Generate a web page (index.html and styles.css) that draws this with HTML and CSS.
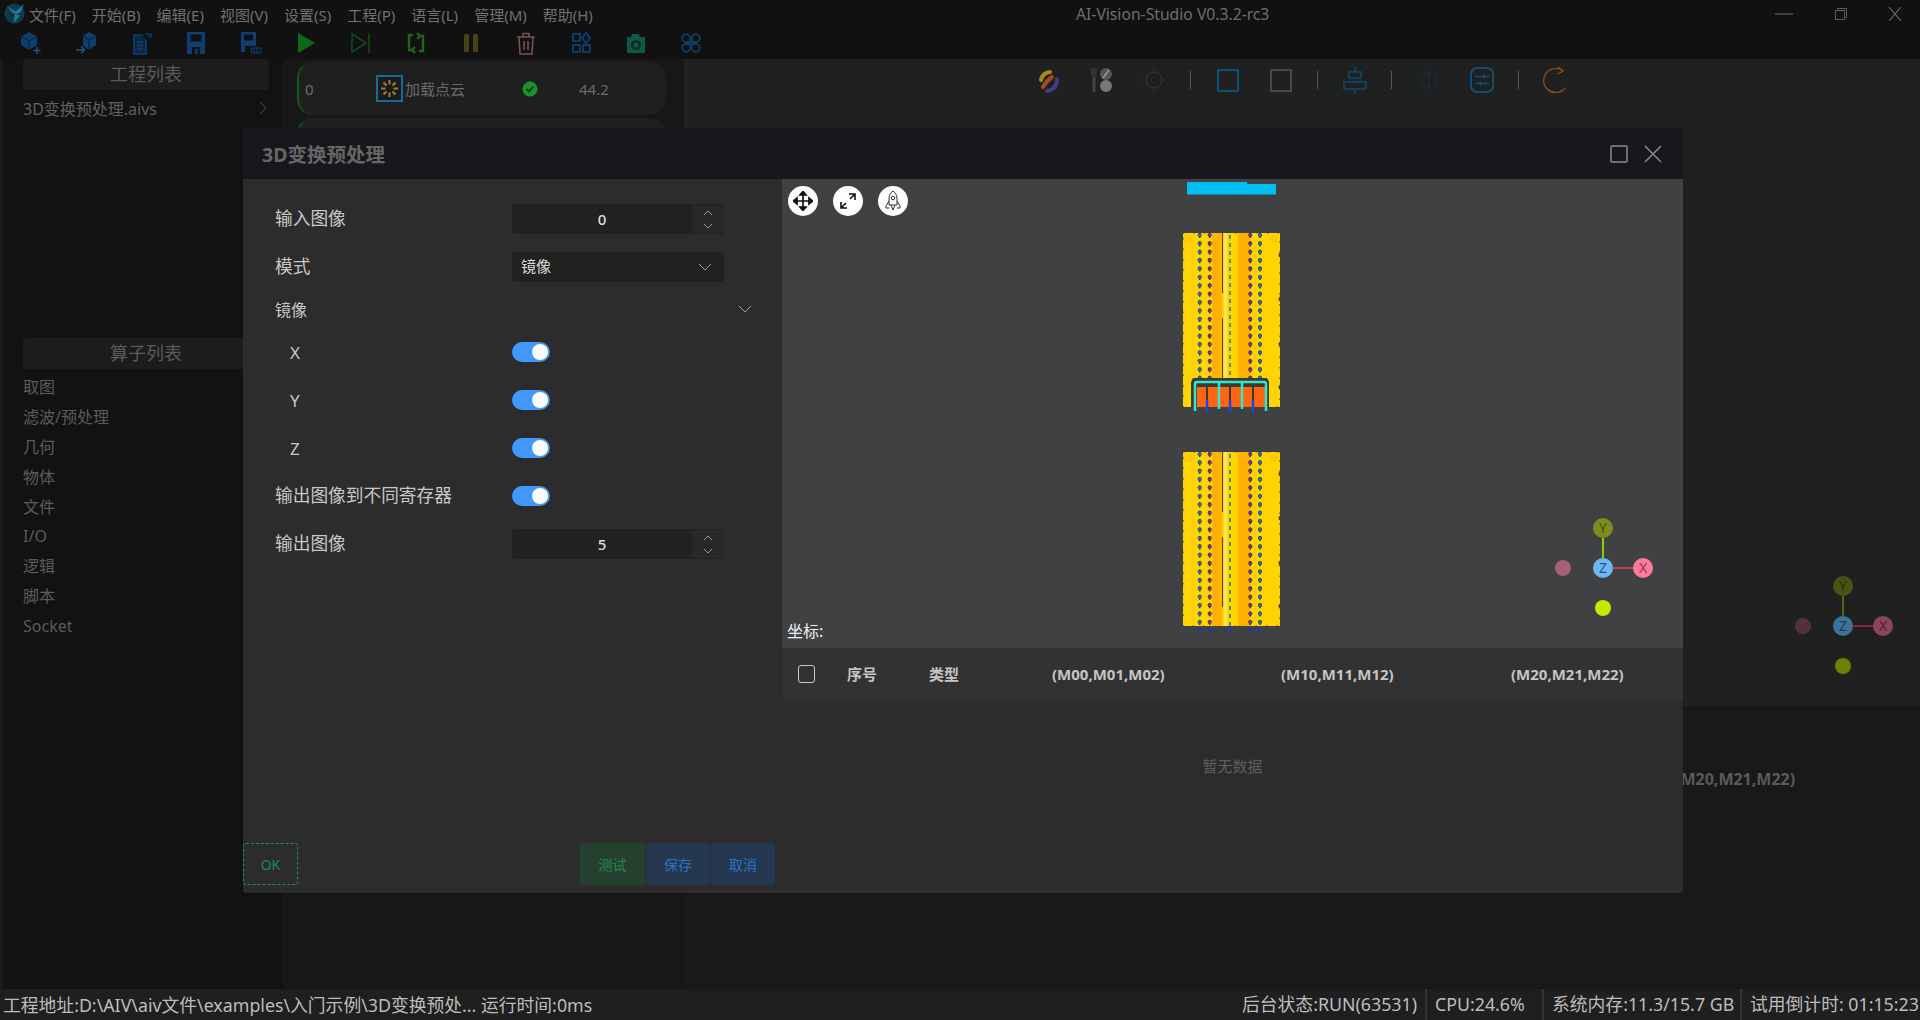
FILE: index.html
```html
<!DOCTYPE html>
<html lang="zh-CN">
  <head>
    <meta charset="UTF-8" />
    <meta name="viewport" content="width=device-width, initial-scale=1.0" />
    <title>AI-Vision-Studio</title>
    <link rel="stylesheet" href="styles.css">
  </head>
  <body>
    <div class="app">
      <div class="titlebar">
        <svg class="logo" viewBox="0 0 24 24">
          <circle cx="11" cy="12" r="10.5" fill="#123a4d" />
          <path d="M3 4l9 6 9-8-4 9-5 2 5 1-7 8 1-8z" fill="#25799a" />
          <path d="M6 12h6l-4 5z" fill="#0e2a38" />
        </svg>
        <div class="menu">
          <span>文件(F)</span><span>开始(B)</span><span>编辑(E)</span><span>视图(V)</span><span>设置(S)</span><span>工程(P)</span><span>语言(L)</span><span>管理(M)</span><span>帮助(H)</span>
        </div>
        <div class="app-title">AI-Vision-Studio V0.3.2-rc3</div>
        <div class="win-btns">
          <svg viewBox="0 0 20 14" width="20" height="14"><path d="M1 7h18" stroke="#5c5c5c" stroke-width="1.2" /></svg>
          <svg viewBox="0 0 14 14" width="14" height="14" fill="none" stroke="#5c5c5c"><path d="M3.5 3.5V1.5h9v9h-2" /><rect x="1.5" y="3.5" width="9" height="9" /></svg>
          <svg viewBox="0 0 14 14" width="14" height="14" stroke="#6a6a6a" stroke-width="1.1"><path d="M1 0l12 14M13 0L1 14" /></svg>
        </div>
      </div>

      <div class="toolbar">
        <div class="tool"><svg viewBox="0 0 24 24" width="24" height="24"><path d="M10 1l8 4.500V14l-8 5-8-5V5.500z" fill="#0f3f70" /><path d="M2 5.500l8 4.500 8-4.500M10 10v9" stroke="#0d1a26" fill="none" /><path d="M18 16v7M14.500 19.500h7" stroke="#15568c" stroke-width="1.600" /></svg></div>
        <div class="tool"><svg viewBox="0 0 24 24" width="24" height="24"><path d="M15 1l7 4v9l-7 5-6-4V5z" fill="#0f3f70" /><path d="M9 5l6 4 7-4M15 9v10" stroke="#0d1a26" fill="none" /><path d="M2 19h8M7 15.500l3.500 3.500L7 22.500" stroke="#15568c" stroke-width="1.600" fill="none" /></svg></div>
        <div class="tool"><svg viewBox="0 0 24 24" width="24" height="24" fill="none" stroke="#0f3f70" stroke-width="1.600"><path d="M14 4H5v19h12V9" fill="#0c2740" /><path d="M8 11h6M8 14.500h6M8 18h6" /><path d="M16 4c3-2 5-1 6 2M22 2.500V6h-3.500" stroke-width="1.200" /></svg></div>
        <div class="tool"><svg viewBox="0 0 24 24" width="24" height="24"><path d="M3 1h18v22H3z" fill="#0f3f70" /><rect x="6.500" y="3.500" width="11" height="7" fill="#111" /><rect x="8" y="16" width="8" height="7" fill="#111" /><rect x="11" y="18" width="2.500" height="5" fill="#0f3f70" /></svg></div>
        <div class="tool"><svg viewBox="0 0 24 24" width="24" height="24"><path d="M2 1h15v20H2z" fill="#0f3f70" /><rect x="5" y="3.500" width="9" height="6" fill="#111" /><rect x="6" y="15" width="7" height="6" fill="#111" /><rect x="11" y="15" width="12" height="8" fill="#111" /><path d="M12.500 17h9.500v5h-9.500zM15 17v5M18 17v5" stroke="#0f3f70" fill="none" /></svg></div>
        <div class="tool"><svg viewBox="0 0 24 24" width="24" height="24"><path d="M4 2l17 10L4 22z" fill="#0b6a1a" /></svg></div>
        <div class="tool"><svg viewBox="0 0 24 24" width="24" height="24" fill="none" stroke="#0b4f14" stroke-width="1.500"><path d="M3 3l14 9-14 9zM20 2v20" /></svg></div>
        <div class="tool"><svg viewBox="0 0 24 24" width="24" height="24" fill="none" stroke="#1f6618" stroke-width="2.400"><path d="M9 4H5v15h3M15 20h4V5h-3M8 19l3-3M8 19l3 3M16 5l-3-3M16 5l-3 3" /></svg></div>
        <div class="tool"><svg viewBox="0 0 24 24" width="24" height="24"><rect x="5" y="3" width="5" height="18" rx="1.500" fill="#474018" /><rect x="14" y="3" width="5" height="18" rx="1.500" fill="#474018" /></svg></div>
        <div class="tool"><svg viewBox="0 0 24 24" width="24" height="24" fill="none" stroke="#7a5050" stroke-width="1.600"><path d="M3 6h18M9 6V2.500h6V6M5 6l1 17h12l1-17M10 10v9M14 10v9" /></svg></div>
        <div class="tool"><svg viewBox="0 0 24 24" width="24" height="24" fill="none" stroke="#0f3f70" stroke-width="1.800"><rect x="4" y="3" width="7" height="7" /><path d="M17 2l4 5-4 5-4-5z" /><rect x="4" y="14" width="7" height="7" /><rect x="14" y="14" width="7" height="7" /></svg></div>
        <div class="tool"><svg viewBox="0 0 24 24" width="24" height="24"><path d="M3 6h4l1-3h7l1 3h5v16H3z" fill="#0c5a46" /><circle cx="12" cy="14" r="5" fill="#0a2c22" /><circle cx="12" cy="14" r="2.500" fill="#0c5a46" /></svg></div>
        <div class="tool"><svg viewBox="0 0 24 24" width="24" height="24" fill="none" stroke="#0d3f5e" stroke-width="1.800"><path d="M11 11H6a4 4 0 1 1 5-5zM13 11V6a4 4 0 1 1 5 5zM11 13v5a4 4 0 1 1-5-5zM13 13h5a4 4 0 1 1-5 5z" /></svg></div>
      </div>

      <div class="main">
        <div class="side">
          <div class="side-top">
            <div class="side-head">工程列表</div>
            <div class="file-row">
              <span>3D变换预处理.aivs</span>
              <svg viewBox="0 0 8 14" width="8" height="14" fill="none" stroke="#4a4a4a"><path d="M1 1l6 6-6 6" /></svg>
            </div>
          </div>
          <div class="side-head">算子列表</div>
          <ul class="op-list">
            <li>取图</li>
            <li>滤波/预处理</li>
            <li>几何</li>
            <li>物体</li>
            <li>文件</li>
            <li>I/O</li>
            <li>逻辑</li>
            <li>脚本</li>
            <li>Socket</li>
          </ul>
        </div>

        <div class="flow">
          <div class="flow-card">
            <span>0</span>
            <span class="flow-name">
              <svg viewBox="0 0 27 27" width="27" height="27">
                <rect x="1" y="1" width="25" height="25" fill="#171c20" stroke="#1c6a94" stroke-width="2" />
                <path d="M13.500 5v4.500M13.500 17.500V22M5 13.500h4.500M17.500 13.500H22M7.500 7.500l3 3M16.500 16.500l3 3M19.500 7.500l-3 3M10.500 16.500l-3 3" stroke="#b07a20" stroke-width="2" />
              </svg>
              加载点云
            </span>
            <svg viewBox="0 0 16 16" width="16" height="16"><circle cx="8" cy="8" r="7.500" fill="#17952c" /><path d="M4.500 8l2.500 2.500 4.500-5" fill="none" stroke="#0c2c12" stroke-width="1.800" /></svg>
            <span>44.2</span>
          </div>
          <div class="flow-card"></div>
        </div>

        <div class="right">
          <div class="view">
            <div class="view-tools">
              <div class="vt"><svg viewBox="0 0 24 24" width="24" height="28" fill="none" stroke-linecap="round" stroke-width="4"><path d="M5 12c1-5 5-8 9-8" stroke="#a88a18" /><path d="M7 19c3-5 6-8 9-10" stroke="#a8481c" /><path d="M11 23c6-1 10-5 10-12" stroke="#453a8a" /></svg></div>
              <div class="vt"><svg viewBox="0 0 24 26" width="24" height="26"><rect x="2" y="1" width="6" height="9" rx="3" fill="#333" /><rect x="3.500" y="10" width="3" height="15" fill="#444" /><circle cx="17" cy="7" r="6" fill="#555" /><path d="M14 11l6-8" stroke="#999" stroke-width="1.500" /><circle cx="17" cy="19" r="6" fill="#777" /></svg></div>
              <div class="vt"><svg viewBox="0 0 24 24" width="24" height="24" fill="none" stroke="#363636"><circle cx="12" cy="12" r="8" /><path d="M12 0.500v1.500M12 22v1.500M0.500 12h1.500M22 12h1.500" /></svg></div>
              <div class="vsep"></div>
              <div class="vt"><div class="sq sq-blue"></div></div>
              <div class="vt"><div class="sq sq-gray"></div></div>
              <div class="vsep"></div>
              <div class="vt"><svg viewBox="0 0 24 26" width="24" height="26" fill="none" stroke="#0f4a6e" stroke-width="1.500"><path d="M12 0v26" /><rect x="6" y="5" width="12" height="6" fill="#1f2121" /><rect x="1" y="15" width="22" height="7" fill="#1f2121" /></svg></div>
              <div class="vsep"></div>
              <div class="vt"><svg viewBox="0 0 18 22" width="18" height="22" fill="none" stroke="#0c3652"><rect x="1" y="4" width="16" height="14" stroke-dasharray="2 1" /><path d="M9 0v22" /></svg></div>
              <div class="vt"><svg viewBox="0 0 24 26" width="24" height="26" fill="none" stroke="#0f4f78" stroke-width="2"><rect x="1" y="1" width="22" height="24" rx="6" /><path d="M5 9.500h14M5 16.500h14" stroke-width="1.500" /><path d="M16 9.500l-3-2.500v5zM8 16.500l3-2.500v5z" fill="#0f4f78" stroke="none" /></svg></div>
              <div class="vsep"></div>
              <div class="vt"><svg viewBox="0 0 26 28" width="26" height="28" fill="none" stroke="#8a5210" stroke-width="1.300"><path d="M20 5A12 12 0 1 0 22 22M15 1l5 4-5 3" /></svg></div>
            </div>
            <svg class="gizmo-back" viewBox="0 0 100 100" width="100" height="100">
              <path d="M50 20V40" stroke="#4f6a14" stroke-width="2" />
              <path d="M60 50H80" stroke="#7d2a3c" stroke-width="2" />
              <circle cx="10" cy="50" r="8" fill="#52303e" />
              <circle cx="50" cy="90" r="8" fill="#6f7f00" />
              <circle cx="50" cy="10" r="10" fill="#4c5214" />
              <circle cx="50" cy="50" r="10" fill="#3f7299" />
              <circle cx="90" cy="50" r="10" fill="#8c4560" />
              <text x="50" y="15" class="g-txt" fill="#2b2f0c">Y</text>
              <text x="50" y="55" class="g-txt" fill="#1d3a50">Z</text>
              <text x="90" y="55" class="g-txt" fill="#4c2030">X</text>
            </svg>
          </div>
          <div class="back-table">(M20,M21,M22)</div>
        </div>
      </div>

      <div class="status">
        <div class="status-left">工程地址:D:\AIV\aiv文件\examples\入门示例\3D变换预处... 运行时间:0ms</div>
        <div class="status-item st-run">后台状态:RUN(63531)</div>
        <div class="status-item st-cpu">CPU:24.6%</div>
        <div class="status-item st-mem">系统内存:11.3/15.7 GB</div>
        <div class="status-item st-time">试用倒计时: 01:15:23</div>
      </div>
    </div>

    <div class="modal">
      <div class="modal-head">
        <h2>3D变换预处理</h2>
        <svg viewBox="0 0 18 18" width="18" height="18" fill="none" stroke="#8c8c8c" stroke-width="1.500"><rect x="1" y="1" width="16" height="16" rx="1" /></svg>
        <svg viewBox="0 0 18 18" width="18" height="18" stroke="#8c8c8c" stroke-width="1.500"><path d="M1 1l16 16M17 1L1 17" /></svg>
      </div>
      <div class="modal-body">
        <div class="form-pane">
          <div class="form">
            <div class="row">
              <label>输入图像</label>
              <div class="num"><span>0</span><div class="stepper"><svg viewBox="0 0 10 6" width="10" height="6"><path d="M1 5l4-4 4 4" /></svg><svg viewBox="0 0 10 6" width="10" height="6"><path d="M1 1l4 4 4-4" /></svg></div></div>
            </div>
            <div class="row">
              <label>模式</label>
              <div class="select"><span>镜像</span><svg viewBox="0 0 14 8" width="14" height="8"><path d="M1 1l6 6 6-6" /></svg></div>
            </div>
            <div class="collapse-head">
              <span>镜像</span>
              <svg viewBox="0 0 14 8" width="14" height="8"><path d="M1 1l6 6 6-6" /></svg>
            </div>
            <div class="row sub"><label>X</label><div class="switch"></div></div>
            <div class="row sub"><label>Y</label><div class="switch"></div></div>
            <div class="row sub"><label>Z</label><div class="switch"></div></div>
            <div class="row">
              <label>输出图像到不同寄存器</label>
              <div class="switch"></div>
            </div>
            <div class="row">
              <label>输出图像</label>
              <div class="num"><span>5</span><div class="stepper"><svg viewBox="0 0 10 6" width="10" height="6"><path d="M1 5l4-4 4 4" /></svg><svg viewBox="0 0 10 6" width="10" height="6"><path d="M1 1l4 4 4-4" /></svg></div></div>
            </div>
          </div>
          <div class="form-foot">
            <button class="btn-ok">OK</button>
            <div class="btn-group">
              <button class="btn btn-green">测试</button>
              <button class="btn btn-blue">保存</button>
              <button class="btn btn-blue">取消</button>
            </div>
          </div>
        </div>

        <div class="data-pane">
          <div class="viewer">
            <svg class="cloud" viewBox="782 179 901 469" width="901" height="469">
              <defs>
                <g id="strip">
                  <rect width="97" height="174" fill="#ffd400" stroke="#404143" stroke-width="1.200" stroke-dasharray="1.500 9" />
                  <circle cx="5" cy="6" r="4" fill="#ffc800" />
                  <circle cx="91" cy="6" r="4" fill="#ffc800" />
                  <rect x="29" y="0" width="10" height="174" fill="#ffb300" />
                  <rect x="55" y="0" width="12" height="174" fill="#ffb000" />
                  <rect x="41" y="0" width="3" height="174" fill="#ffe35a" />
                  <path d="M39.500 0v174" stroke="#4a4a30" stroke-dasharray="60 25 70 19" />
                  <path d="M16.700 0v174M26.700 0v174M67.300 0v174M77 0v174" stroke="#3a3a30" stroke-width="1.500" stroke-dasharray="5 3.400" />
                  <path d="M16.700 2v172M26.700 2v172M67.300 2v172M77 2v172" stroke="#3a3a30" stroke-width="4.200" stroke-linecap="round" stroke-dasharray="0 8.400" />
                  <path d="M16.700 2v172M77 2v172" stroke="#2272c4" stroke-width="3.200" stroke-linecap="round" stroke-dasharray="0 8.400" />
                  <path d="M26.700 2v172M67.300 2v172" stroke="#8a24bc" stroke-width="3" stroke-linecap="round" stroke-dasharray="0 8.400" />
                  <path d="M47 2v172" stroke="#2a7fa0" stroke-width="1.600" stroke-dasharray="4 4" />
                  <circle cx="98" cy="22" r="2.500" fill="#404143" />
                  <circle cx="98" cy="66" r="2.500" fill="#404143" />
                  <circle cx="98" cy="111" r="2.500" fill="#404143" />
                  <circle cx="98" cy="154" r="2.500" fill="#404143" />
                </g>
              </defs>
              <path d="M1187 182h60v2h29v10.500h-89z" fill="#00bdf2" />
              <use href="#strip" x="1183" y="233" />
              <path d="M1193 378h74l2 4v25h-78v-25z" fill="#3a3a30" />
              <path d="M1197 387h69v20h-69z" fill="#ff6510" />
              <path d="M1207 387v20M1230 387v20M1253 387v20" stroke="#3a3a30" stroke-width="2" />
              <path d="M1195 411v-27q0-2 2-2h67q2 0 2 2v27M1219 382v27M1242 382v27" fill="none" stroke="#2fe8d0" stroke-width="2.500" />
              <path d="M1207 400v12M1230 400v12M1253 400v12" stroke="#1c46e0" stroke-width="2.500" />
              <use href="#strip" x="1183" y="452" />
              <path d="M1200 628v4M1210 628v4M1230.500 628v4M1249 628v4M1258.500 628v4" stroke="#2a2ae0" stroke-width="2.500" />
            </svg>
            <div class="view-btn" style="left: 6px"><svg viewBox="0 0 20 20" width="20" height="20" fill="none" stroke="#111" stroke-width="1.700"><path d="M10 1v18M1 10h18" /><path d="M10 0.500l3 3.500H7zM10 19.500l3-3.500H7zM0.500 10L4 7v6zM19.500 10L16 7v6z" fill="#111" /></svg></div>
            <div class="view-btn" style="left: 51px"><svg viewBox="0 0 20 20" width="20" height="20" fill="none" stroke="#111" stroke-width="1.600"><path d="M3 17L8 12M3 11v6h6M17 3l-5 5M11 3h6v6" /></svg></div>
            <div class="view-btn" style="left: 96px"><svg viewBox="0 0 20 22" width="20" height="22" fill="none" stroke="#333"><path d="M10 1c3 2 4 5 4 8v6H6V9c0-3 1-6 4-8z" /><circle cx="10" cy="8" r="1.800" /><path d="M6 11l-3 5v2h3M14 11l3 5v2h-3M8 15l2 5 2-5" /></svg></div>
            <div class="coord">坐标:</div>
            <svg class="gizmo" viewBox="0 0 100 100" width="100" height="100">
              <path d="M50 20V40" stroke="#8ccf00" stroke-width="2" />
              <path d="M60 50H80" stroke="#c8374f" stroke-width="2" />
              <circle cx="10" cy="50" r="8" fill="#a5607a" />
              <circle cx="50" cy="90" r="8" fill="#c4ea00" />
              <circle cx="50" cy="10" r="10" fill="#7f8a1f" />
              <circle cx="50" cy="50" r="10" fill="#6ab8f7" />
              <circle cx="90" cy="50" r="10" fill="#ff7a9c" />
              <text x="50" y="15" class="g-txt" fill="#4b5212">Y</text>
              <text x="50" y="55" class="g-txt" fill="#2e5a80">Z</text>
              <text x="90" y="55" class="g-txt" fill="#8f3c55">X</text>
            </svg>
          </div>
          <div class="table-head">
            <span class="check"></span>
            <span>序号</span>
            <span>类型</span>
            <span>(M00,M01,M02)</span>
            <span>(M10,M11,M12)</span>
            <span>(M20,M21,M22)</span>
          </div>
          <div class="table-empty">暂无数据</div>
        </div>
      </div>
    </div>
  </body>
</html>
```

FILE: styles.css
```css
* {
  box-sizing: border-box;
}
html, body {
  margin: 0;
  height: 100%;
  overflow: hidden;
}
body {
  font-family: "Noto Sans", "Noto Sans CJK SC", sans-serif;
  background: #111;
  color: #666;
}
.app {
  display: flex;
  flex-direction: column;
  height: 100vh;
}

/* title bar */
.titlebar {
  display: flex;
  align-items: center;
  height: 27px;
  padding-left: 4px;
  background: #111;
  position: relative;
}
.logo {
  width: 23px;
  height: 23px;
  flex: none;
}
.menu {
  display: flex;
  gap: 16px;
  margin-left: 2px;
  font-size: 15px;
  color: #707070;
  padding-top: 2px;
}
.app-title {
  position: absolute;
  left: 1076px;
  top: 3px;
  font-size: 15.700px;
  line-height: 22px;
  color: #6e6e6e;
}
.win-btns {
  margin-left: auto;
  display: flex;
  align-items: center;
  gap: 40px;
  padding-right: 18px;
}
.toolbar {
  display: flex;
  height: 32px;
  padding-left: 3px;
  background: #111;
}
.tool {
  width: 55px;
  display: flex;
  align-items: center;
  justify-content: center;
}

/* main area behind the dialog */
.main {
  flex: 1;
  display: flex;
  min-height: 0;
}
.side {
  width: 283px;
  flex: none;
  background: #121212;
  border-left: 3px solid #1b1b1b;
  padding: 0 14px 0 20px;
}
.side-top {
  height: 279px;
}
.side-head {
  height: 31px;
  line-height: 31px;
  text-align: center;
  font-size: 18px;
  color: #5a5a5a;
  background: #1c1c1c;
  border-radius: 4px;
}
.file-row {
  display: flex;
  align-items: center;
  justify-content: space-between;
  height: 36px;
  padding-right: 2px;
  font-size: 16px;
  color: #606060;
}
.op-list {
  list-style: none;
  margin: 4px 0 0;
  padding: 0;
  font-size: 16px;
  color: #5c5c5c;
}
.op-list li {
  height: 29.900px;
  line-height: 29.900px;
}
.flow {
  width: 401px;
  flex: none;
  background: #171717;
  padding: 3px 18px 0 14px;
}
.flow-card {
  display: grid;
  grid-template-columns: 71px 146px 57px 1fr;
  align-items: center;
  height: 53px;
  margin-bottom: 3px;
  padding-left: 6px;
  background: #1f1f1f;
  border-left: 2px solid #0f5a14;
  border-radius: 16px;
  font-size: 15px;
  color: #6a6a6a;
}
.flow-name {
  display: flex;
  align-items: center;
  gap: 2px;
}
.right {
  flex: 1;
  display: flex;
  flex-direction: column;
}
.view {
  height: 647px;
  position: relative;
  background: #1f2121;
}
.view-tools {
  display: flex;
  align-items: center;
  height: 42px;
  padding-left: 337px;
}
.vt {
  width: 53px;
  display: flex;
  align-items: center;
  justify-content: center;
}
.vsep {
  width: 21px;
  height: 18px;
  background: linear-gradient(#555, #555) center / 1px 100% no-repeat;
}
.sq {
  width: 22px;
  height: 23px;
  border: 2px solid;
}
.sq-blue {
  border-color: #0f4f78;
}
.sq-gray {
  border-color: #484848;
}
.gizmo-back {
  position: absolute;
  left: 1109px;
  top: 517px;
}
.g-txt {
  font-size: 14px;
  text-anchor: middle;
}
.back-table {
  flex: 1;
  background: #191919;
  padding: 63px 0 0 991px;
  font-size: 16px;
  line-height: 20px;
  font-weight: 700;
  color: #5a5a5a;
}

/* status bar */
.status {
  display: flex;
  align-items: center;
  height: 31px;
  padding-left: 3px;
  background: #1f1f1f;
  font-size: 17.800px;
  color: #bdbdbd;
  white-space: nowrap;
}
.status-left {
  flex: 1;
  padding-bottom: 2px;
}
.status-item {
  height: 31px;
  line-height: 30px;
  padding-left: 8px;
  border-left: 2px solid #333;
}
.st-run {
  padding: 0 8px 0 0;
  border-left: none;
}
.st-cpu {
  width: 117px;
}
.st-mem {
  width: 198px;
}
.st-time {
  width: 180px;
}

/* dialog */
.modal {
  position: absolute;
  left: 243px;
  top: 128px;
  width: 1440px;
  height: 765px;
  display: flex;
  flex-direction: column;
  background: #2c2c2c;
  border-radius: 4px;
  overflow: hidden;
}
.modal-head {
  display: flex;
  align-items: center;
  gap: 16px;
  height: 51px;
  flex: none;
  padding: 0 21px 0 19px;
  background: #18181c;
}
.modal-head h2 {
  margin: 0 auto 0 0;
  font-size: 19.500px;
  font-weight: 700;
  color: #666;
}
.modal-body {
  flex: 1;
  display: flex;
  min-height: 0;
}
.form-pane {
  width: 539px;
  flex: none;
  display: flex;
  flex-direction: column;
  justify-content: space-between;
}
.form {
  padding: 16px 0 0 32px;
  color: #c8c8c8;
}
.row {
  display: grid;
  grid-template-columns: 237px 212px;
  align-items: center;
  height: 48px;
  font-size: 17.700px;
}
.row label {
  padding-bottom: 4px;
}
.row.sub {
  padding-left: 15px;
  grid-template-columns: 222px 212px;
  font-size: 17px;
}
.row.sub label {
  padding-bottom: 0;
}
.num, .select {
  display: flex;
  align-items: center;
  height: 30px;
  background: #212121;
  border-radius: 4px;
  font-size: 15px;
  color: #ddd;
}
.num span {
  flex: 1;
  text-align: center;
  font-weight: 500;
}
.stepper {
  width: 32px;
  height: 28px;
  display: flex;
  flex-direction: column;
  align-items: center;
  justify-content: center;
  gap: 7px;
  background: #282828;
  border-radius: 0 4px 4px 0;
}
.stepper svg, .select svg, .collapse-head svg {
  fill: none;
  stroke: #9a9a9a;
}
.select {
  justify-content: space-between;
  padding: 0 12px 0 9px;
}
.select span {
  padding-bottom: 3px;
}
.collapse-head {
  display: flex;
  align-items: center;
  justify-content: space-between;
  width: 478px;
  height: 37px;
  padding: 1px 1px 2px 0;
  font-size: 16px;
}
.switch {
  width: 38px;
  height: 20px;
  position: relative;
  background: #4098fc;
  border-radius: 10px;
}
.switch::after {
  content: "";
  position: absolute;
  top: 2px;
  right: 2px;
  width: 16px;
  height: 16px;
  background: #fff;
  border-radius: 50%;
}
.form-foot {
  display: flex;
  justify-content: space-between;
  align-items: center;
  padding: 0 7px 8px 0;
}
.btn-ok, .btn {
  height: 42px;
  font: inherit;
  font-size: 14px;
  border-radius: 3px;
}
.btn-ok {
  width: 55px;
  background: transparent;
  border: 1px dashed #2a8a58;
  color: #1f8a4c;
}
.btn-group {
  display: flex;
  gap: 1px;
}
.btn {
  width: 64px;
  border: none;
}
.btn-green {
  width: 65px;
  background: #25402f;
  color: #1f8a4c;
}
.btn-blue {
  background: #253850;
  color: #2a72c8;
}
.data-pane {
  flex: 1;
  display: flex;
  flex-direction: column;
}
.viewer {
  height: 469px;
  position: relative;
  background: #404143;
}
.cloud {
  position: absolute;
  left: 0;
  top: 0;
}
.view-btn {
  position: absolute;
  top: 7px;
  width: 30px;
  height: 30px;
  display: flex;
  align-items: center;
  justify-content: center;
  background: #fff;
  border-radius: 50%;
}
.coord {
  position: absolute;
  left: 5px;
  bottom: 7px;
  font-size: 16px;
  line-height: 20px;
  color: #f0f0f0;
}
.gizmo {
  position: absolute;
  left: 771px;
  top: 339px;
}
.table-head {
  display: grid;
  grid-template-columns: 65px 82px 123px 229px 230px 1fr;
  align-items: center;
  height: 51px;
  background: #323232;
  font-size: 15px;
  font-weight: 700;
  color: #c4c4c4;
}
.check {
  justify-self: start;
  width: 17px;
  height: 18px;
  margin-left: 16px;
  border: 1px solid #c8c8c8;
  border-radius: 3px;
}
.table-empty {
  padding-top: 57px;
  text-align: center;
  font-size: 15px;
  line-height: 20px;
  color: #5e5e5e;
}
```
